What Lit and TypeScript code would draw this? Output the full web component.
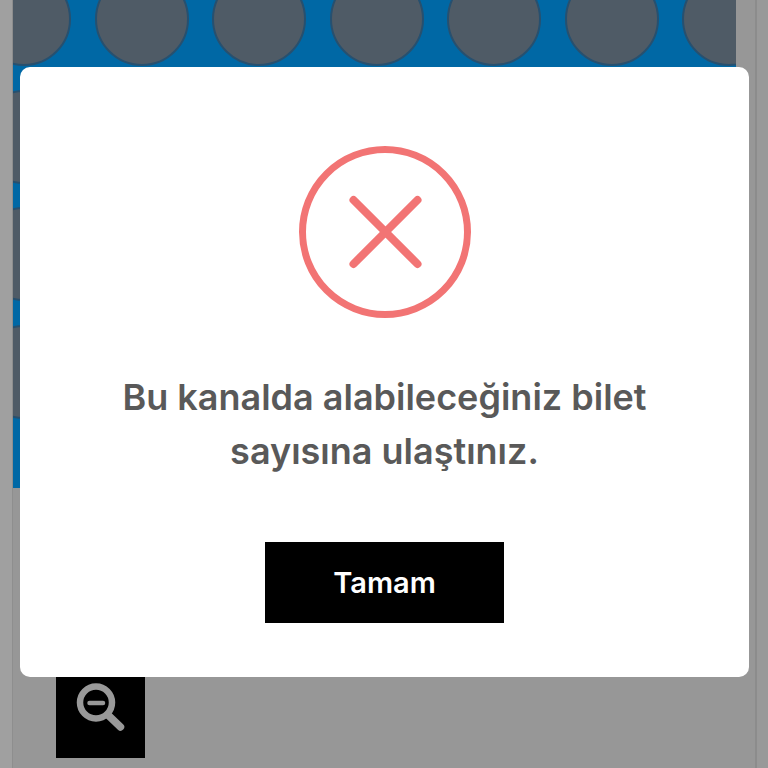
import { LitElement, html, css } from "lit";
import { customElement } from "lit/decorators.js";

@customElement("app-root")
export class AppRoot extends LitElement {
  static styles = css`
    :host { display: block; width: 768px; height: 768px; position: relative; overflow: hidden; background: #999; font-family: "Inter", "Liberation Sans", sans-serif; }
    .page { display: flex; height: 768px; }
    .rail { width: 12px; flex: none; background: #a0a0a0; border-right: 1px solid #8e8e8e; }
    .main { width: 742px; flex: none; border-right: 2px solid #8c8c8c; background: #979797; }
    .hall { width: 723px; height: 488px; background: #0068a5; overflow: hidden; }
    .seats { display: grid; grid-template-columns: repeat(7, 94px); grid-auto-rows: 94px; gap: 23.5px; margin: -28px 0 0 -36px; }
    .seat { border-radius: 50%; background: #4f5b66; border: 2px solid #27506f; box-sizing: border-box; }
    .zoom { width: 89px; height: 89px; margin: 181px 0 0 43px; background: #000; display: flex; }
    .zoom svg { display: block; }
    .overlay { position: absolute; inset: 0; padding: 67px 0 0 20px; box-sizing: border-box; }
    .modal { width: 729px; height: 610px; background: #fff; border-radius: 10px; display: flex; flex-direction: column; align-items: center; box-sizing: border-box; padding-top: 79px; }
    .icon { display: block; width: 172px; height: 172px; }
    .msg { margin: 52px 0 0; font-size: 36px; line-height: 54px; font-weight: 600; color: #595959; text-align: center; width: 600px; }
    .ok { margin-top: 64px; width: 239px; height: 81px; border: 0; background: #000; color: #fff; font: 600 29px/1 "Inter", "Liberation Sans", sans-serif; padding: 0; }
  `;
  render() {
    return html`
      <div class="page">
        <div class="rail"></div>
        <div class="main">
          <div class="hall">
            <div class="seats">${Array.from({ length: 28 }, () => html`<div class="seat"></div>`)}</div>
          </div>
          <div class="zoom">
            <svg width="89" height="89" viewBox="0 0 89 89" fill="none" stroke="#999" stroke-linecap="round">
              <circle cx="40" cy="33.5" r="16" stroke-width="6.5"></circle>
              <path d="M52 46 L64.5 58" stroke-width="7.5"></path>
              <path d="M33.5 34 H47" stroke-width="4.5"></path>
            </svg>
          </div>
        </div>
      </div>
      <div class="overlay">
        <div class="modal">
          <svg class="icon" viewBox="0 0 172 172" fill="none" stroke="#f27474" stroke-linecap="round">
            <circle cx="86" cy="86" r="82.5" stroke-width="7"></circle>
            <path d="M54.5 54 L118.5 118 M118.5 54 L54.5 118" stroke-width="8"></path>
          </svg>
          <p class="msg">Bu kanalda alabileceğiniz bilet<br />sayısına ulaştınız.</p>
          <button class="ok">Tamam</button>
        </div>
      </div>
    `;
  }
}
